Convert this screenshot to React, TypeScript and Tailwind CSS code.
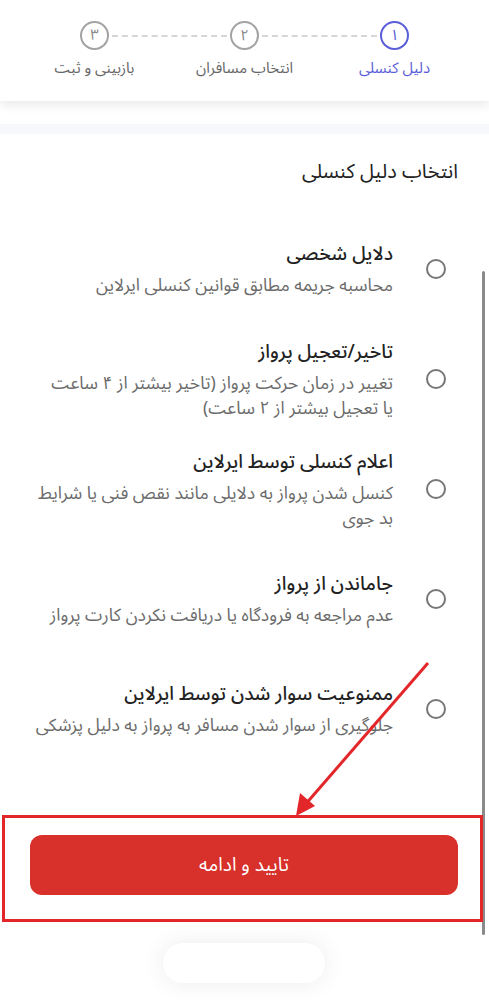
import React from 'react'

const steps = [
  { n: '۱', label: 'دلیل کنسلی', active: true },
  { n: '۲', label: 'انتخاب مسافران', active: false },
  { n: '۳', label: 'بازبینی و ثبت', active: false },
]

const reasons = [
  { title: 'دلایل شخصی', desc: ['محاسبه جریمه مطابق قوانین کنسلی ایرلاین'] },
  { title: 'تاخیر/تعجیل پرواز', desc: ['تغییر در زمان حرکت پرواز (تاخیر بیشتر از ۴ ساعت', 'یا تعجیل بیشتر از ۲ ساعت)'] },
  { title: 'اعلام کنسلی توسط ایرلاین', desc: ['کنسل شدن پرواز به دلایلی مانند نقص فنی یا شرایط', 'بد جوی'] },
  { title: 'جاماندن از پرواز', desc: ['عدم مراجعه به فرودگاه یا دریافت نکردن کارت پرواز'] },
  { title: 'ممنوعیت سوار شدن توسط ایرلاین', desc: ['جلوگیری از سوار شدن مسافر به پرواز به دلیل پزشکی'] },
]

const StepCircle = ({ n, active }: { n: string; active: boolean }) => (
  <div
    className={`w-[29px] h-[29px] shrink-0 rounded-full border-2 flex items-center justify-center text-[15px] leading-none ${
      active ? 'border-[#5a5ed8] text-[#5a5ed8]' : 'border-[#a3a3a3] text-[#8a8a8a]'
    }`}
  >
    {n}
  </div>
)

const Dash = () => <div className="flex-1 mx-[3px] border-t-2 border-dashed border-[#d6d6d6]" />

export default function App() {
  return (
    <div
      dir="rtl"
      className="relative w-[489px] h-[1000px] overflow-hidden bg-white"
      style={{ fontFamily: '"Noto Sans Arabic", "Vazirmatn", "DejaVu Sans", sans-serif' }}
    >
      {/* stepper */}
      <header className="h-[101px] bg-white shadow-[0_4px_10px_rgba(0,0,0,0.09)] relative z-10">
        <div className="flex items-center pt-[21px] pr-[80px] pl-[80px]">
          <StepCircle n={steps[0].n} active />
          <Dash />
          <StepCircle n={steps[1].n} active={false} />
          <Dash />
          <StepCircle n={steps[2].n} active={false} />
        </div>
        <div className="grid grid-cols-3 w-[450px] mx-auto mt-[6px]">
          {steps.map((s) => (
            <div
              key={s.n}
              className={`text-center text-[15px] leading-[24px] ${s.active ? 'text-[#5a5ed8]' : 'text-[#666]'}`}
            >
              {s.label}
            </div>
          ))}
        </div>
      </header>

      <div className="h-[23px]" />
      <div className="h-[10px] bg-[#f7f8fc]" />

      <main className="pr-[31px] pl-[30px]">
        <h1 className="mt-[23px] text-[20px] leading-[30px] text-[#222]">انتخاب دلیل کنسلی</h1>

        <div className="mt-[27px] pr-[12px]">
          {reasons.map((r) => (
            <label key={r.title} className="h-[110px] flex items-center gap-[33px]">
              <span className="w-[20px] h-[20px] shrink-0 rounded-full border-2 border-[#777]" />
              <span className="flex flex-col">
                <span className="text-[19px] leading-[28px] font-medium text-[#222]">{r.title}</span>
                <span className="mt-[5px] text-[17.5px] leading-[25px] text-[#6b6b6b]">
                  {r.desc.map((d) => (
                    <span key={d} className="block whitespace-nowrap">
                      {d}
                    </span>
                  ))}
                </span>
              </span>
            </label>
          ))}
        </div>

        <div className="mt-[71px]">
          <button className="w-full h-[60px] rounded-[12px] bg-[#d8302a] text-white text-[19px]">تایید و ادامه</button>
        </div>
      </main>

      {/* bottom pill */}
      <div className="absolute left-[163px] top-[943px] w-[162px] h-[40px] rounded-full bg-white shadow-[0_0_24px_rgba(0,0,0,0.08)]" />

      {/* scrollbar */}
      <div className="absolute left-[482px] top-[271px] w-[3px] h-[664px] rounded-full bg-[#8a8a8a]" />

      {/* highlight box and arrow */}
      <div className="absolute left-[2px] top-[815px] w-[481px] h-[107px] border-[3px] border-[#e3262a]" />
      <svg className="absolute left-0 top-0" width="489" height="1000" viewBox="0 0 489 1000">
        <line x1="428" y1="663" x2="304" y2="806" stroke="#e3262a" strokeWidth="3" />
        <polygon points="296,816 300,793 315,806" fill="#e3262a" />
      </svg>
    </div>
  )
}
